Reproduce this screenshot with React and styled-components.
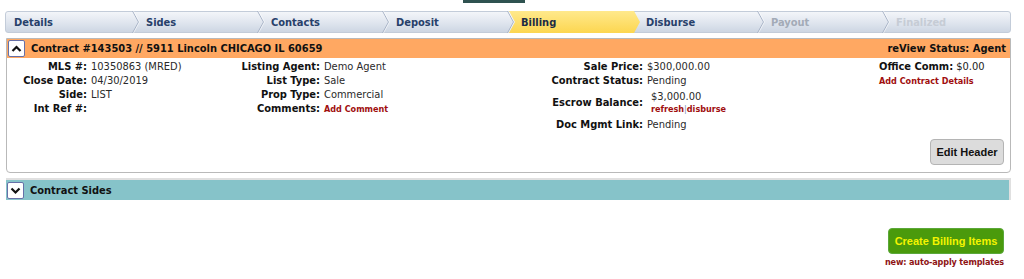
import React from 'react'
import styled, { createGlobalStyle } from 'styled-components'

const GlobalStyle = createGlobalStyle`
  body {
    margin: 0;
    background: #fff;
    font-family: "DejaVu Sans Condensed", "DejaVu Sans", sans-serif;
    font-size: 11px;
    color: #222;
  }
`

const Page = styled.div`
  width: 1024px;
  height: 279px;
  overflow: hidden;
`

const TopTab = styled.div`
  width: 62px;
  height: 3px;
  margin-left: 463px;
  background: #2f5250;
`

const Crumbs = styled.div`
  display: flex;
  margin: 8px 13px 0 5px;
  height: 22px;
  border: 1px solid #c3ccd9;
  border-radius: 3px;
  background: linear-gradient(#f3f5f9, #dfe5ee 55%, #cdd6e3);
  box-sizing: border-box;
`

const Step = styled.div`
  position: relative;
  flex: ${p => (p.$last ? '1' : `0 0 ${p.$w}px`)};
  display: flex;
  align-items: center;
  padding-left: ${p => (p.$first ? 8 : 6)}px;
  font-weight: bold;
  color: ${p => (p.$faint ? '#c6ccd5' : p.$disabled ? '#a3abb7' : '#27406a')};
  box-sizing: border-box;

  ${p =>
    p.$active &&
    `
    &::before {
      content: '';
      position: absolute;
      left: -6px;
      right: 0;
      top: -1px;
      bottom: -1px;
      background: linear-gradient(#ffe98c, #fcd650);
      clip-path: polygon(0 0, calc(100% - 6px) 0, 100% 50%, calc(100% - 6px) 100%, 0 100%, 6px 50%);
    }
    color: #1c2b45;
  `}
`

const StepLabel = styled.span`
  position: relative;
`

const Chevron = styled.svg`
  position: absolute;
  right: 0;
  top: -1px;
  width: 8px;
  height: 22px;
`

const Panel = styled.div`
  margin: 5px 13px 0 6px;
  border: 1px solid #b9b9b9;
  border-radius: 0 0 4px 4px;
`

const Bar = styled.div`
  display: flex;
  align-items: center;
  height: ${p => p.$h}px;
  padding: 0 4px 0 1px;
  background: ${p => p.$bg};
  font-weight: bold;
  color: #111;
`

const BarTitle = styled.span`
  flex: 1;
  margin-left: 6px;
`

const Toggle = styled.div`
  width: 15px;
  height: 15px;
  border: 1px solid #6670a8;
  border-radius: 2px;
  background: #fff;
  display: flex;
  align-items: center;
  justify-content: center;
`

const Details = styled.div`
  display: flex;
  padding-top: 2px;
`

const Column = styled.div`
  flex: 0 0 ${p => p.$w}px;
  display: grid;
  grid-template-columns: ${p => p.$lw}px 1fr;
  align-content: start;
`

const OfficeColumn = styled.div`
  line-height: 14px;
`

const Label = styled.div`
  display: flex;
  align-items: center;
  justify-content: flex-end;
  white-space: nowrap;
  font-weight: bold;
  color: #111;
  line-height: 14px;
`

const InlineLabel = styled.span`
  font-weight: bold;
  color: #111;
`

const Value = styled.div`
  padding: ${p => (p.$tall ? '3px 0' : '0')};
  padding-left: ${p => (p.$tall ? 8 : 4)}px;
  line-height: ${p => (p.$tall ? 12 : 14)}px;
  white-space: nowrap;
  color: #2a2a2a;
`

const Link = styled.span`
  color: #a00e0e;
  font-weight: bold;
  font-size: 9px;
`

const Pipe = styled.span`
  color: #7b8fb5;
  font-weight: normal;
`

const Actions = styled.div`
  display: flex;
  justify-content: flex-end;
  padding: 7px 6px 7px 0;
`

const GreyButton = styled.button`
  width: 74px;
  height: 26px;
  border: 1px solid #b4b4b4;
  border-radius: 4px;
  background: #dcdcdc;
  font-family: "Liberation Sans", Arial, sans-serif;
  font-weight: bold;
  font-size: 11px;
  color: #111;
  padding: 0;
`

const SidesPanel = styled.div`
  margin: 5px 13px 0 6px;
  border-top: 2px solid #e0e0e0;
  border-right: 2px solid #e0e0e0;
`

const Footer = styled.div`
  display: flex;
  flex-direction: column;
  align-items: flex-end;
  margin: 28px 20px 0 0;
`

const GreenButton = styled.button`
  width: 116px;
  height: 26px;
  border: 1px solid #5aa83a;
  border-radius: 4px;
  background: #4a9a0c;
  font-family: "Liberation Sans", Arial, sans-serif;
  font-weight: bold;
  font-size: 11px;
  color: #f4f400;
  padding: 0;
`

const Note = styled.div`
  margin-top: 3px;
  font-size: 9px;
  letter-spacing: -0.15px;
  font-weight: bold;
  color: #8e1414;
`

const ChevUp = () => (
  <svg width="11" height="9" viewBox="0 0 11 9">
    <polyline points="1.5,7 5.5,3 9.5,7" fill="none" stroke="#111" strokeWidth="2.2" />
  </svg>
)

const ChevDown = () => (
  <svg width="11" height="9" viewBox="0 0 11 9">
    <polyline points="1.5,2.5 5.5,6.5 9.5,2.5" fill="none" stroke="#111" strokeWidth="2.2" />
  </svg>
)

const steps = [
  { name: 'Details', w: 134 },
  { name: 'Sides', w: 125 },
  { name: 'Contacts', w: 125 },
  { name: 'Deposit', w: 125 },
  { name: 'Billing', w: 125, active: true },
  { name: 'Disburse', w: 125 },
  { name: 'Payout', w: 125, disabled: true },
  { name: 'Finalized', faint: true, last: true },
]

const columns = [
  {
    w: 235,
    lw: 80,
    rows: [
      ['MLS #:', '10350863 (MRED)'],
      ['Close Date:', '04/30/2019'],
      ['Side:', 'LIST'],
      ['Int Ref #:', ''],
    ],
  },
  {
    w: 309,
    lw: 78,
    rows: [
      ['Listing Agent:', 'Demo Agent'],
      ['List Type:', 'Sale'],
      ['Prop Type:', 'Commercial'],
      ['Comments:', <Link key="c">Add Comment</Link>],
    ],
  },
  {
    w: 328,
    lw: 92,
    rows: [
      ['Sale Price:', '$300,000.00'],
      ['Contract Status:', 'Pending'],
      [
        'Escrow Balance:',
        <>
          <div>$3,000.00</div>
          <Link>
            refresh<Pipe>|</Pipe>disburse
          </Link>
        </>,
        true,
      ],
      ['Doc Mgmt Link:', 'Pending'],
    ],
  },
]

export default function App() {
  return (
    <Page>
      <GlobalStyle />
      <TopTab />
      <Crumbs>
        {steps.map(s => (
          <Step
            key={s.name}
            $w={s.w}
            $first={s.name === 'Details'}
            $last={s.last}
            $active={s.active}
            $disabled={s.disabled}
            $faint={s.faint}
          >
            <StepLabel>{s.name}</StepLabel>
            {!s.last && !s.active && (
              <Chevron viewBox="0 0 8 22">
                <polyline points="0.5,0 6.5,11 0.5,22" fill="none" stroke="#a7b3c6" strokeWidth="1" />
                <polyline points="1.5,0 7.5,11 1.5,22" fill="none" stroke="#fff" strokeWidth="0.8" opacity="0.7" />
              </Chevron>
            )}
          </Step>
        ))}
      </Crumbs>

      <Panel>
        <Bar $bg="#ffa862" $h={19}>
          <Toggle>
            <ChevUp />
          </Toggle>
          <BarTitle>Contract #143503 // 5911 Lincoln CHICAGO IL 60659</BarTitle>
          <span>reView Status: Agent</span>
        </Bar>
        <Details>
          {columns.map((col, i) => (
            <Column key={i} $w={col.w} $lw={col.lw}>
              {col.rows.map(([label, value, tall], j) => (
                <React.Fragment key={j}>
                  <Label>{label}</Label>
                  <Value $tall={tall}>{value}</Value>
                </React.Fragment>
              ))}
            </Column>
          ))}
          <OfficeColumn>
            <div>
              <InlineLabel>Office Comm:</InlineLabel> $0.00
            </div>
            <Link>Add Contract Details</Link>
          </OfficeColumn>
        </Details>
        <Actions>
          <GreyButton>Edit Header</GreyButton>
        </Actions>
      </Panel>

      <SidesPanel>
        <Bar $bg="#86c3c9" $h={20}>
          <Toggle>
            <ChevDown />
          </Toggle>
          <BarTitle>Contract Sides</BarTitle>
        </Bar>
      </SidesPanel>

      <Footer>
        <GreenButton>Create Billing Items</GreenButton>
        <Note>new: auto-apply templates</Note>
      </Footer>
    </Page>
  )
}
